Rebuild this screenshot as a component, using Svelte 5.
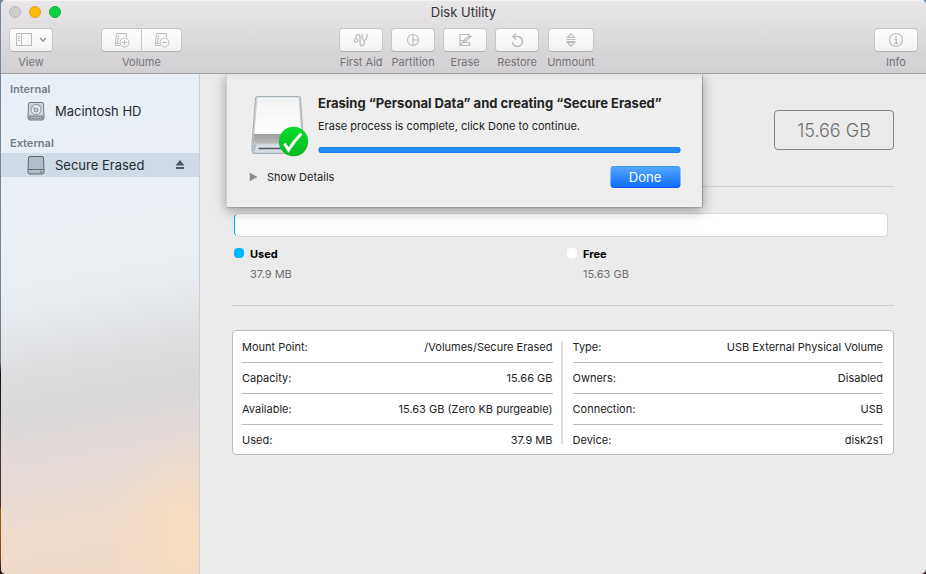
<script>
let title = "Disk Utility"

let sections = [
    { name: "Internal", disks: [{ name: "Macintosh HD", kind: "internal" }] },
    { name: "External", disks: [{ name: "Secure Erased", kind: "external" }] }
]

let tools = [
    { id: "aid", label: "First Aid" },
    { id: "partition", label: "Partition" },
    { id: "erase", label: "Erase" },
    { id: "restore", label: "Restore" },
    { id: "unmount", label: "Unmount" }
]

let tables = [
    [
        ["Mount Point:", "/Volumes/Secure Erased"],
        ["Capacity:", "15.66 GB"],
        ["Available:", "15.63 GB (Zero KB purgeable)"],
        ["Used:", "37.9 MB"]
    ],
    [
        ["Type:", "USB External Physical Volume"],
        ["Owners:", "Disabled"],
        ["Connection:", "USB"],
        ["Device:", "disk2s1"]
    ]
]

let selected = $state("Secure Erased")
let sheetOpen = $state(true)
</script>

{#snippet volumeIcon(minus)}
    <svg width="16" height="16" viewBox="0 0 16 16">
        <path d="M6 13.5H1.5V11L2.5 1.5H12.5V5M1.500 11.500H5.500M3.500 11L4.500 3" />
        <circle cx="10.5" cy="10.5" r="4.5" />
        <path d="M8 10.5H13" />
        {#if !minus}<path d="M10.5 8V13" />{/if}
    </svg>
{/snippet}

<div class="desktop">
<div class="window">
    <header>
        <div class="titlebar">
            <div class="lights">
                <button class="light" aria-label="Close"></button>
                <button class="light yellow" aria-label="Minimize"></button>
                <button class="light green" aria-label="Zoom"></button>
            </div>
            <h1>{title}</h1>
        </div>

        <div class="toolbar">
            <div class="tool">
                <button class="btn view" aria-labelledby="view-label">
                    <svg width="16" height="14" viewBox="0 0 16 14">
                        <rect x="0.5" y="0.5" width="15" height="12" />
                        <path d="M5.5 1V12.5M2 3.5H4M2 5.5H4M2 7.5H4" />
                    </svg>
                    <svg class="chevron" width="8" height="6" viewBox="0 0 8 6">
                        <path d="M1 1L4 4L7 1" />
                    </svg>
                </button>
                <span id="view-label">View</span>
            </div>

            <div class="tool volume">
                <div class="pair">
                    <button class="btn" aria-label="Add volume">{@render volumeIcon(false)}</button>
                    <button class="btn" aria-label="Remove volume">{@render volumeIcon(true)}</button>
                </div>
                <span>Volume</span>
            </div>

            <div class="space"></div>

            <div class="tools">
                {#each tools as tool}
                    <div class="tool">
                        <button class="btn" class:large={tool.id === "unmount"} aria-labelledby={tool.id}>
                            <svg width="16" height="16" viewBox="0 0 16 16">
                                {#if tool.id === "aid"}
                                    <path class="mid" d="M10 2.500L8.800 3Q8.500 7.500 11.200 8.500Q14.200 7.500 14.200 3L13 2.500" />
                                    <path class="mid" d="M11.200 8.500V11Q11 13.700 9 13.700Q7 13.700 7 11V5.500Q7 2.500 5 2.500Q3 2.500 3 5V6.500" />
                                    <circle class="mid" cx="3" cy="8.300" r="1.800" />
                                {:else if tool.id === "partition"}
                                    <circle class="mid" cx="8" cy="8" r="5.500" />
                                    <path class="mid" d="M8 2.500V13.500M8 8H13.500" />
                                {:else if tool.id === "erase"}
                                    <path class="mid" d="M12 4V2.500H3V8.500H6M3 13.500H12.500V10.500H6L3 13.500V9" />
                                    <path class="mid" d="M14 4.500L9.500 8.500L6.500 9.500L8 7L12.500 4Z" />
                                {:else if tool.id === "restore"}
                                    <path class="thick" d="M3.500 10A5 5 0 1 0 8 4.500H5" />
                                    <path class="thick" d="M7 1.500L4 4.500L7 7.500" />
                                {:else}
                                    <path class="mid" d="M8 1.800L11.500 5.500H4.500ZM8 14.200L4.500 10.500H11.500Z" />
                                    <path d="M3.500 7.500H12.500M3.500 9.500H12.500" />
                                {/if}
                            </svg>
                        </button>
                        <span id={tool.id}>{tool.label}</span>
                    </div>
                {/each}
            </div>

            <div class="space wide"></div>

            <div class="tool">
                <button class="btn" aria-labelledby="info-label">
                    <svg width="16" height="16" viewBox="0 0 16 16">
                        <circle class="mid" cx="8" cy="8" r="6.500" />
                        <path class="thick" d="M6.500 7H8.300V11.500M6.200 11.500H10.200M7.300 4.500H8.900" />
                    </svg>
                </button>
                <span id="info-label">Info</span>
            </div>
        </div>
    </header>

    <div class="body">
        <nav>
            {#each sections as section}
                <h2>{section.name}</h2>
                {#each section.disks as disk}
                    <div class="disk" class:selected={selected === disk.name}>
                        <button class="pick" onclick={() => selected = disk.name}>
                            <svg width="18" height="20" viewBox="0 0 18 20">
                                {#if disk.kind === "internal"}
                                    <path d="M3 1.500H15Q16.500 1.500 16.500 3L17 15V17Q17 19 15 19H3Q1 19 1 17V15L1.500 3Q1.500 1.500 3 1.500Z" fill="#cfd4da" stroke="#757c84" />
                                    <circle cx="9" cy="8.500" r="5" fill="#e9edf1" stroke="#8d949c" />
                                    <circle cx="9" cy="9" r="2" fill="#cfd4da" stroke="#7b828a" />
                                    <path d="M4.500 4.500L7.500 8M12 3.500L14 5.500" stroke="#8d949c" fill="none" />
                                    <path d="M1.500 14.500H16.500V18.500H1.500Z" fill="#868d95" />
                                    <path d="M4 16.500H14" stroke="#cfd4da" stroke-dasharray="2 1" />
                                {:else}
                                    <path d="M3 1.500H15Q16.500 1.500 16.500 3L17 15V17Q17 19 15 19H3Q1 19 1 17V15L1.500 3Q1.500 1.500 3 1.500Z" fill="#b1bdc8" stroke="#5f6870" />
                                    <path d="M1.500 14.500H16.500" stroke="#5f6870" />
                                    <path d="M13 17H15" stroke="#5f6870" />
                                {/if}
                            </svg>
                            {disk.name}
                        </button>
                        {#if disk.kind === "external"}
                            <button class="eject" aria-label="Eject {disk.name}">
                                <svg width="10" height="10" viewBox="0 0 10 10">
                                    <path d="M5 0L9.5 5.5H0.5ZM1 7H9V9H1Z" fill="#4c565f" />
                                </svg>
                            </button>
                        {/if}
                    </div>
                {/each}
            {/each}
        </nav>

        <main>
            <div class="summary">
                <div class="size">15.66 GB</div>
            </div>
            <hr>
            <div class="usage"></div>
            <div class="legend">
                <div class="key">
                    <i class="dot used"></i>
                    <div><b>Used</b><p>37.9 MB</p></div>
                </div>
                <div class="key">
                    <i class="dot"></i>
                    <div><b>Free</b><p>15.63 GB</p></div>
                </div>
            </div>
            <hr>
            <section>
                {#each tables as rows}
                    <div class="half">
                        <table>
                            <tbody>
                                {#each rows as [name, value]}
                                    <tr><th scope="row">{name}</th><td>{value}</td></tr>
                                {/each}
                            </tbody>
                        </table>
                    </div>
                {/each}
            </section>
        </main>

        {#if sheetOpen}
            <div class="sheet" role="dialog" aria-labelledby="sheet-title">
                <div class="message">
                    <svg width="60" height="64" viewBox="0 0 60 64">
                        <defs>
                            <linearGradient id="lid" x1="0" y1="0" x2="0" y2="1">
                                <stop offset="0" stop-color="#f3f3f4" />
                                <stop offset="1" stop-color="#ffffff" />
                            </linearGradient>
                            <linearGradient id="edge" x1="0" y1="0" x2="0" y2="1">
                                <stop offset="0" stop-color="#a0a0a1" />
                                <stop offset="1" stop-color="#b5b6b7" />
                            </linearGradient>
                            <linearGradient id="tick" x1="0" y1="0" x2="0" y2="1">
                                <stop offset="0" stop-color="#08dc2c" />
                                <stop offset="1" stop-color="#08b822" />
                            </linearGradient>
                        </defs>
                        <path d="M8 3.500H49Q51 3.500 51 5L54 50V58Q54 60.500 51 60.500H5.500Q2.500 60.500 2.500 58V50L6 5Q6 3.500 8 3.500Z" fill="#c9d3d7" stroke="#a3afb4" />
                        <path d="M8 4.500H49L51.500 41H5Z" fill="url(#lid)" />
                        <path d="M4.500 41H52L53 50.500H3.500Z" fill="url(#edge)" />
                        <path d="M3.500 51.500H53V57Q53 59 51 59H5.500Q3.500 59 3.500 57Z" fill="#d6dee1" />
                        <path d="M9 55.500H34" stroke="#515c61" stroke-width="1.500" />
                        <path d="M3.500 51.500H7L5 59Q3.500 58 3.500 56Z" fill="#aebbc0" />
                        <circle cx="44" cy="48.500" r="14.700" fill="url(#tick)" />
                        <path d="M35 50.500L39 57Q44.500 48 52 40.500" fill="none" stroke="#fff" stroke-width="3" />
                    </svg>
                    <div class="text">
                        <h3 id="sheet-title">Erasing “Personal Data” and creating “Secure Erased”</h3>
                        <p>Erase process is complete, click Done to continue.</p>
                        <div class="progress" role="progressbar" aria-label="Erase progress" aria-valuenow="100"></div>
                    </div>
                </div>
                <div class="actions">
                    <button class="details">
                        <svg width="8" height="10" viewBox="0 0 8 10"><path d="M0 0.500L8 5L0 9.500Z" fill="#8b8b8b" /></svg>
                        Show Details
                    </button>
                    <button class="done" onclick={() => sheetOpen = false}>Done</button>
                </div>
            </div>
        {/if}
    </div>
</div>
</div>

<style>
:global(body) {
    margin: 0;
}

.desktop {
    min-height: 100vh;
    box-sizing: border-box;
    padding-left: 1px;
    display: flex;
    background: linear-gradient(#7089a5 0%, #77869a 50%, #68738a 63%, #161318 65%, #2b1c20 71%, #4d3035 80%, #4a2b24 88%, #a95a08 89%, #8c4a0c 97%, #30191a 99%);
    font-family: Inter, "Liberation Sans", sans-serif;
    font-size: 11px;
    color: #232323;
}

.window {
    flex: 1;
    display: flex;
    flex-direction: column;
    border-radius: 5px;
    overflow: hidden;
    background: #ebebeb;
}

h1, h2, h3, p {
    margin: 0;
    font-weight: 400;
}

button {
    font: inherit;
    color: inherit;
    padding: 0;
    border: none;
    background: none;
}

svg {
    display: block;
    flex: none;
}

header {
    background: linear-gradient(#e9e7e9, #d1cfd1);
    border-bottom: 1px solid #a3a1a3;
    box-shadow: inset 0 1px #f5f4f5;
}

.titlebar {
    display: grid;
    grid-template-columns: 1fr auto 1fr;
    align-items: center;
    height: 23px;
    padding: 0 8px;
}

.lights {
    display: flex;
    gap: 8px;
}

.light {
    width: 12px;
    height: 12px;
    border-radius: 50%;
    background: #cecdce;
    border: 1px solid #b7b6b7;
}

.yellow {
    background: #ffbd05;
    border-color: #e2a023;
}

.green {
    background: #07d445;
    border-color: #16ae32;
}

h1 {
    font-size: 13px;
    line-height: 20px;
    color: #333;
}

.toolbar {
    display: flex;
    padding: 5px 8px 4px;
}

.tool {
    display: flex;
    flex-direction: column;
    align-items: center;
    gap: 3px;
    color: #77757a;
    line-height: 14px;
}

.tools {
    display: flex;
    gap: 8px;
}

.tools .tool {
    min-width: 44px;
}

.volume {
    margin-left: 48px;
}

.space {
    flex: 9;
}

.wide {
    flex: 16;
}

.btn {
    box-sizing: border-box;
    width: 44px;
    height: 24px;
    display: flex;
    align-items: center;
    justify-content: center;
    border: 1px solid #c6c5c7;
    border-bottom-color: #b2b0b3;
    border-radius: 4px;
    background: linear-gradient(#fdfdfd, #f2f2f2);
}

.large {
    width: 46px;
}

.btn svg {
    fill: none;
    stroke: #bcbbbd;
    stroke-width: 1;
}

.btn .mid {
    stroke-width: 1.2;
}

.btn .thick {
    stroke-width: 1.5;
}

.view {
    gap: 7px;
}

.btn .chevron {
    stroke: #969598;
    stroke-width: 1.5;
}

.pair {
    display: flex;
}

.pair .btn {
    width: 41px;
    border-radius: 4px 0 0 4px;
}

.pair .btn + .btn {
    width: 40px;
    border-left: none;
    border-radius: 0 4px 4px 0;
}

.body {
    flex: 1;
    display: flex;
    position: relative;
    overflow: hidden;
}

nav {
    box-sizing: border-box;
    width: 199px;
    flex: none;
    padding-top: 7px;
    border-right: 1px solid #cfcfd0;
    background:
        radial-gradient(ellipse 80px 110px at 95% 93%, #f7dec1, #f7dec100),
        linear-gradient(170deg, #e8eff6 0%, #ebf0f5 32%, #e8edf1 44%, #dedee0 56%, #dad9da 64%, #e3dad9 72%, #e8dbd4 80%, #efdbcc 87%, #efdac9 100%);
}

h2 {
    padding-left: 9px;
    font-size: 11px;
    font-weight: 600;
    line-height: 16px;
    color: #747d86;
}

.disk {
    display: flex;
    align-items: center;
    justify-content: space-between;
    height: 24px;
    margin: 2px 0 12px;
    padding: 0 14px 0 26px;
}

.selected {
    background: #cfdbe6;
}

.pick {
    display: flex;
    align-items: center;
    gap: 10px;
    font-size: 13px;
    color: #262a2e;
}

main {
    flex: 1;
    min-width: 0;
    padding: 0 32px;
}

hr {
    margin: 0;
    border: none;
    border-top: 1px solid #d0d0d0;
}

.summary {
    display: flex;
    justify-content: flex-end;
    padding: 36px 0;
}

.size {
    box-sizing: border-box;
    width: 120px;
    height: 40px;
    border: 1px solid #858585;
    border-radius: 4px;
    font-size: 18px;
    font-weight: 300;
    line-height: 40px;
    text-align: center;
    color: #6e6e6e;
}

.usage {
    box-sizing: border-box;
    height: 24px;
    margin: 26px 6px 0 2px;
    border: 1px solid #d8d8d8;
    border-left-color: #00aef5;
    border-radius: 5px;
    background: #fff;
}

.legend {
    display: grid;
    grid-template-columns: 333px 1fr;
    padding: 7px 0 21px 2px;
    line-height: 20px;
}

.key {
    display: flex;
    gap: 6px;
}

.key b {
    font-weight: 700;
    color: #000;
}

.key p {
    color: #707070;
}

.dot {
    width: 10px;
    height: 10px;
    margin-top: 4px;
    border-radius: 4px;
    background: #fff;
}

.used {
    background: #00b7ff;
}

section {
    display: flex;
    margin-top: 24px;
    padding: 1px 10px 0 9px;
    border: 1px solid #bdbdbd;
    border-radius: 4px;
    background: #fff;
}

.half {
    flex: 1;
    position: relative;
}

.half + .half {
    padding-left: 20px;
}

/* divider between the two halves */
.half + .half::before {
    content: "";
    position: absolute;
    left: 8px;
    top: 9px;
    bottom: 10px;
    width: 2px;
    background: #dedede;
}

table {
    width: 100%;
    border-spacing: 0;
}

th, td {
    height: 30px;
    padding: 0;
    border-bottom: 1px solid #bcbcbc;
    line-height: 14px;
}

tr:last-child th, tr:last-child td {
    height: 29px;
    border: none;
}

th {
    font-weight: 400;
    text-align: left;
}

td {
    text-align: right;
}

.sheet {
    position: absolute;
    top: 0;
    left: 50%;
    transform: translateX(-50%);
    box-sizing: border-box;
    width: 475px;
    padding: 19px 21px;
    background: linear-gradient(#e0e0e0, #eee 5px);
    box-shadow: 0 0 1px 1px rgba(0, 0, 0, 0.2), 0 3px 12px rgba(0, 0, 0, 0.4);
}

.message {
    display: flex;
    gap: 9px;
    padding-left: 2px;
}

.text {
    flex: 1;
}

h3 {
    font-size: 13px;
    font-weight: 700;
    line-height: 20px;
}

.text p {
    margin-top: 4px;
    line-height: 18px;
}

.progress {
    height: 6px;
    margin-top: 12px;
    border-radius: 3px;
    background: #238dfb;
    box-shadow: inset 0 0 0 1px #1c7fe6;
}

.actions {
    display: flex;
    align-items: center;
    justify-content: space-between;
    margin-top: 9px;
}

.details {
    display: flex;
    align-items: center;
    gap: 10px;
    padding-left: 2px;
}

.done {
    width: 70px;
    height: 22px;
    border-radius: 4px;
    background: linear-gradient(#58aafd, #0a6cff);
    box-shadow: inset 0 -1px #1b53f5, inset 0 1px #3f9cf5;
    font-size: 13px;
    color: #fff;
}
</style>
